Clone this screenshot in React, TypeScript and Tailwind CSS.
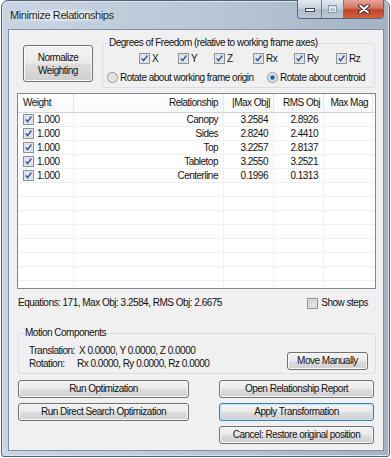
import type { ReactNode } from 'react'

const rows = [
  { name: 'Canopy', max: '3.2584', rms: '2.8926' },
  { name: 'Sides', max: '2.8240', rms: '2.4410' },
  { name: 'Top', max: '3.2257', rms: '2.8137' },
  { name: 'Tabletop', max: '3.2550', rms: '3.2521' },
  { name: 'Centerline', max: '0.1996', rms: '0.1313' },
]

function CheckBox({ checked = true }: { checked?: boolean }) {
  return (
    <svg width="11" height="11" viewBox="0 0 11 11" className="shrink-0">
      <defs>
        <linearGradient id="cbg" x1="0" y1="0" x2="1" y2="1">
          <stop offset="0" stopColor="#cbcfd5" />
          <stop offset="1" stopColor="#f6f6f6" />
        </linearGradient>
      </defs>
      <rect x="0.5" y="0.5" width="10" height="10" fill="#f4f4f4" stroke="#8e8f8f" />
      <rect x="2" y="2" width="7" height="7" fill={checked ? '#e4ecf7' : 'url(#cbg)'} stroke={checked ? '#b6c4d8' : '#aeb3b9'} strokeWidth="0.6" />
      {checked && <path d="M2.8 5.4 L4.6 7.6 L8.3 2.6" stroke="#2c4d9e" strokeWidth="1.5" fill="none" />}
    </svg>
  )
}

function Radio({ checked = false }: { checked?: boolean }) {
  return (
    <svg width="11" height="11" viewBox="0 0 11 11" className="shrink-0">
      <circle cx="5.5" cy="5.5" r="5" fill="#eeeeee" stroke="#8e8f8f" />
      <circle cx="5.5" cy="5.5" r="3.6" fill="#e2e2e2" />
      {checked && <circle cx="5.5" cy="5.5" r="3" fill="#9ec8ee" />}
      {checked && <circle cx="5.5" cy="5.5" r="2" fill="#1f5aa6" />}
    </svg>
  )
}

function Button({ children, className = '', focused = false }: { children: ReactNode; className?: string; focused?: boolean }) {
  return (
    <div
      className={`flex items-center justify-center rounded-[3px] border bg-[linear-gradient(to_bottom,#f2f2f2_0%,#ebebeb_48%,#dddddd_52%,#cfcfcf_100%)] text-center ${
        focused ? 'border-[#3c7fb1] shadow-[inset_0_0_0_1px_#c4e5f6]' : 'border-[#707070] shadow-[inset_0_0_0_1px_#fbfbfb]'
      } ${className}`}
    >
      {children}
    </div>
  )
}

function Caption() {
  return (
    <div className="-mt-px flex h-[19px] overflow-hidden rounded-b-[4px] border border-t-0 border-[#5a6878]">
      <div className="flex w-[24px] items-center justify-center border-r border-[#6d7b8b] bg-[linear-gradient(to_bottom,#e3e9f0_0%,#c6d1dd_48%,#aebccb_52%,#b9c6d3_100%)]">
        <svg width="10" height="6" viewBox="0 0 10 6">
          <rect x="0.5" y="2.5" width="9" height="3" fill="#fff" stroke="#3b4654" />
        </svg>
      </div>
      <div className="flex w-[22px] items-center justify-center border-r border-[#6d7b8b] bg-[linear-gradient(to_bottom,#e3e9f0_0%,#c6d1dd_48%,#aebccb_52%,#b9c6d3_100%)]">
        <svg width="9" height="8" viewBox="0 0 9 8">
          <rect x="0.5" y="0.5" width="8" height="7" fill="none" stroke="#8d9aa8" />
          <rect x="1.5" y="2.5" width="6" height="4" fill="none" stroke="#e6ecf2" />
        </svg>
      </div>
      <div className="flex w-[39px] items-center justify-center bg-[linear-gradient(to_bottom,#e8a698_0%,#d47563_45%,#c24129_55%,#d1613f_100%)]">
        <svg width="12" height="10" viewBox="0 0 12 10">
          <path d="M2 1.5 L10 8.5 M10 1.5 L2 8.5" stroke="#3b2a28" strokeWidth="4" strokeLinecap="round" />
          <path d="M2 1.5 L10 8.5 M10 1.5 L2 8.5" stroke="#ffffff" strokeWidth="2" strokeLinecap="round" />
        </svg>
      </div>
    </div>
  )
}

export default function App() {
  return (
    <div className="h-[458px] w-[391px] bg-white font-['Liberation_Sans',Arial,sans-serif] text-[10px] leading-[12px] tracking-[-0.5px] text-[#111]">
      <div className="ml-[1px] flex h-[457px] w-[389px] flex-col rounded-t-[7px] rounded-b-[3px] border border-[#55626f] bg-[linear-gradient(to_right,#c9d5e2,#b6c4d4_60%,#a3b2c4)] shadow-[inset_0_0_0_1px_#dbe3ec]">
        <div className="flex h-[28px] shrink-0 items-start justify-between pl-[6px] pr-[5px]">
          <div className="mt-[8px] rounded-full bg-[radial-gradient(ellipse_at_center,#e6ecf2_40%,transparent_75%)] px-[2px] text-[11px] leading-[13px] tracking-[-0.4px] text-[#1e1e1e]">
            Minimize Relationships
          </div>
          <Caption />
        </div>

        <div className="ml-[6px] mr-[5px] flex h-[422px] flex-col border border-[#8392a3] bg-[#f0f0f0]">
          {/* top section */}
          <div className="flex items-start pt-[7px]">
            <Button className="ml-[14px] mt-[8px] h-[37px] w-[70px] flex-col leading-[13px]">
              <span>Normalize</span>
              <span>Weighting</span>
            </Button>
            <fieldset className="ml-[9px] w-[273px] rounded-[3px] border border-[#d5dfe5] pb-[3px]">
              <legend className="ml-[5px] px-[1px]">Degrees of Freedom (relative to working frame axes)</legend>
              <div className="mt-[3px] flex h-[13px] items-center pl-[36px]">
                {[
                  ['X', 'w-[39px]'],
                  ['Y', 'w-[36px]'],
                  ['Z', 'w-[39px]'],
                  ['Rx', 'w-[41px]'],
                  ['Ry', 'w-[42px]'],
                  ['Rz', 'w-[30px]'],
                ].map(([l, w]) => (
                  <div key={l} className={`flex items-center gap-[2px] ${w}`}>
                    <CheckBox />
                    <span>{l}</span>
                  </div>
                ))}
              </div>
              <div className="mt-[6px] flex h-[13px] items-center pl-[4px]">
                <div className="flex w-[160px] items-center gap-[2px]">
                  <Radio />
                  <span>Rotate about working frame origin</span>
                </div>
                <div className="flex items-center gap-[2px]">
                  <Radio checked />
                  <span>Rotate about centroid</span>
                </div>
              </div>
            </fieldset>
          </div>

          {/* list view */}
          <div className="ml-[8px] mt-[5px] h-[196px] w-[359px] overflow-hidden border border-[#828790] bg-white">
            <div className="flex h-[19px] border-b border-[#d5d5d5] bg-[linear-gradient(to_bottom,#ffffff,#f7f8fa)]">
              <div className="flex w-[56px] items-center border-r border-[#e5e5e5] pl-[5px]">Weight</div>
              <div className="flex w-[150px] items-center justify-end border-r border-[#e5e5e5] pr-[5px]">Relationship</div>
              <div className="flex w-[50px] items-center justify-end border-r border-[#e5e5e5] pr-[3px]">|Max Obj|</div>
              <div className="flex w-[50px] items-center justify-end border-r border-[#e5e5e5] pr-[3px]">RMS Obj</div>
              <div className="flex w-[49px] items-center justify-end border-r border-[#e5e5e5] pr-[4px]">Max Mag</div>
            </div>
            {Array.from({ length: 13 }).map((_, i) => {
              const r = rows[i]
              return (
                <div key={i} className="flex h-[14px] border-b border-[#f0f0f0]">
                  <div className="flex w-[56px] items-center gap-[3px] border-r border-[#f0f0f0] pl-[5px]">
                    {r && <CheckBox />}
                    {r && <span>1.000</span>}
                  </div>
                  <div className="flex w-[150px] items-center justify-end border-r border-[#f0f0f0] pr-[5px]">{r?.name}</div>
                  <div className="flex w-[50px] items-center justify-end border-r border-[#f0f0f0] pr-[5px]">{r?.max}</div>
                  <div className="flex w-[50px] items-center justify-end border-r border-[#f0f0f0] pr-[5px]">{r?.rms}</div>
                  <div className="flex w-[49px] items-center border-r border-[#f0f0f0]" />
                </div>
              )
            })}
          </div>

          {/* summary */}
          <div className="ml-[9px] mr-[15px] mt-[8px] flex items-center justify-between">
            <span>Equations: 171, Max Obj: 3.2584, RMS Obj: 2.6675</span>
            <div className="flex items-center gap-[3px]">
              <CheckBox checked={false} />
              <span>Show steps</span>
            </div>
          </div>

          {/* motion components */}
          <fieldset className="ml-[9px] mt-[18px] w-[358px] rounded-[3px] border border-[#d5dfe5] pb-[3px]">
            <legend className="ml-[5px] px-[1px]">Motion Components</legend>
            <div className="mt-[5px] flex items-end justify-between pl-[10px] pr-[7px]">
              <div className="flex flex-col">
                <div className="flex h-[13px] items-center">
                  <span className="w-[50px]">Translation:</span>
                  <span>X 0.0000, Y 0.0000, Z 0.0000</span>
                </div>
                <div className="flex h-[13px] items-center">
                  <span className="w-[48px]">Rotation:</span>
                  <span>Rx 0.0000, Ry 0.0000, Rz 0.0000</span>
                </div>
              </div>
              <Button className="h-[18px] w-[81px]">Move Manually</Button>
            </div>
          </fieldset>

          {/* actions */}
          <div className="ml-[9px] mt-[6px] grid grid-cols-[171px_155px] gap-x-[30px] gap-y-[5px]">
            <Button className="h-[18px]">Run Optimization</Button>
            <Button className="h-[18px]">Open Relationship Report</Button>
            <Button className="h-[18px]">Run Direct Search Optimization</Button>
            <Button className="h-[18px]" focused>
              Apply Transformation
            </Button>
            <div />
            <Button className="h-[18px]">Cancel: Restore original position</Button>
          </div>
        </div>
      </div>
    </div>
  )
}
